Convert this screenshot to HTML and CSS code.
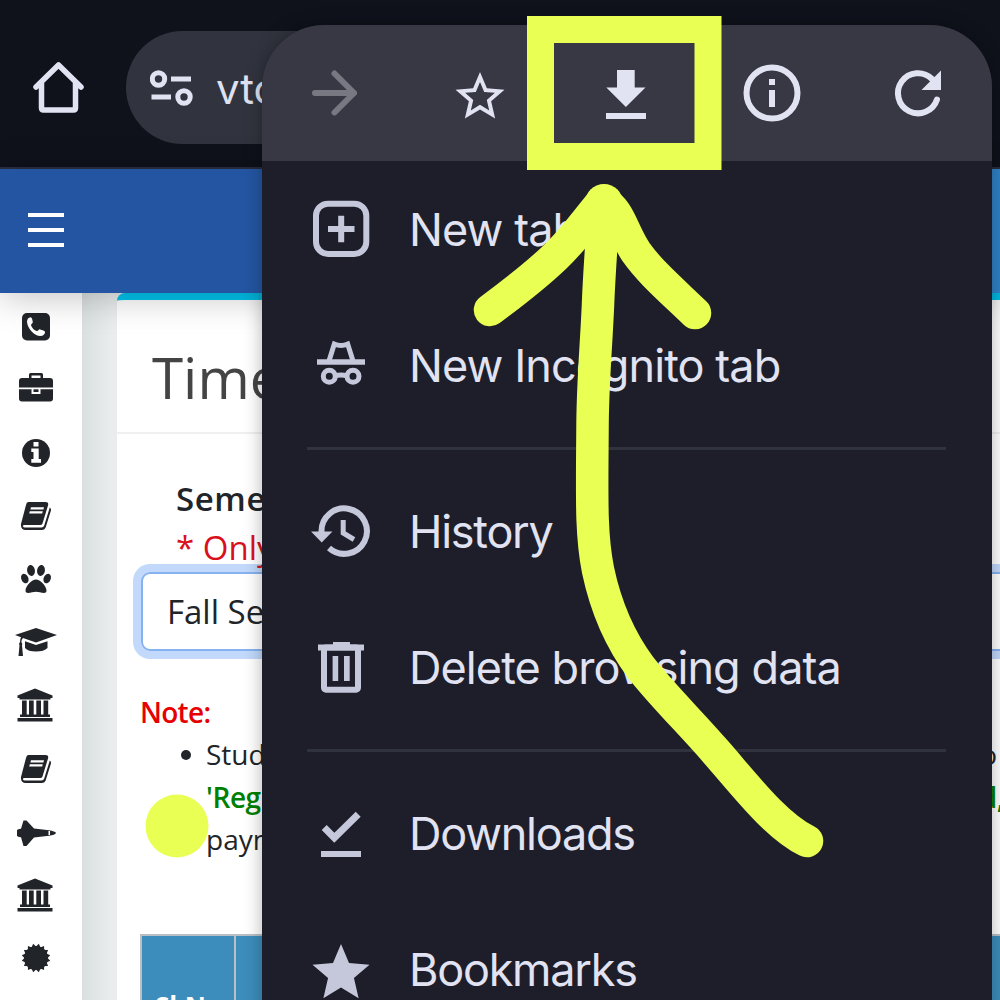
FILE: index.html
```html
<!DOCTYPE html>
<html lang="en">
<head>
<meta charset="utf-8">
<title>Time Table</title>
<link rel="stylesheet" href="styles.css">
</head>
<body>
<svg class="symbols" width="0" height="0">
  <symbol id="bank" viewBox="0 0 44 44">
    <path d="M21 5.500L38.500 12.500V15H36.500V16.500H5.500V15H3.500V12.500Z"/>
    <path d="M8 17.500H12.700V31.500H8ZM15 17.500H19.700V31.500H15ZM22.300 17.500H27V31.500H22.300ZM29.500 17.500H34.200V31.500H29.500ZM6 31.500H36V34H6ZM3.500 35H38.500V38.500H3.500Z"/>
  </symbol>
  <symbol id="book" viewBox="0 0 44 44">
    <path d="M14 8H31.500Q35 8 34 11.500L28.500 29.500Q28 31 26 31H10.500Q8.500 31 9 32.500Q9.300 33.500 11 33.500H27.500Q29.500 33.500 30.200 31.500L35.800 13.500Q37.500 14.500 36.800 17L31.800 33Q30.800 36 27.800 36H11Q6.500 35.500 7 30L12 11Q12.500 8.500 14 8Z"/>
    <path class="cut" d="M17 13.300H30L29.400 15.500H16.400ZM15.800 17.300H28.800L28.200 19.500H15.200Z"/>
  </symbol>
</svg>

<div class="browser">
  <header class="toolbar">
    <svg class="home" viewBox="0 0 60 60"><path d="M8 31L30.500 9L53 31M13.500 27V52Q13.500 54 15.500 54H45.500Q47.500 54 47.500 52V27"/></svg>
    <div class="address">
      <svg class="tune" viewBox="0 0 44 40"><circle cx="8.500" cy="11" r="6.200"/><circle cx="34" cy="29" r="6.200"/><path d="M21 11H41M1.500 29H21"/></svg>
      <span>vtop</span>
    </div>
  </header>

  <nav class="site-bar"><div class="burger"><i></i><i></i><i></i></div></nav>

  <div class="page">
    <aside class="sidebar">
      <svg viewBox="0 0 44 44"><rect x="8" y="8" width="28" height="27.500" rx="5"/><path class="cut" d="M13 16.500c0-2 1.500-4.200 3.500-4.200 1.500 0 2 3 2.300 4.600.2 1.500-2.200 2.200-1.700 3.500 1 2.500 3 4.700 5.600 5.700 1.200.4 2-2 3.400-1.700 2 .4 5 1.300 5 2.500 0 2-2 4.100-4.700 4.100-6 0-13.400-7.800-13.400-14.500z"/></svg>
      <svg viewBox="0 0 44 44"><path d="M15 10V6.500Q15 5 16.500 5H27.500Q29 5 29 6.500V10H36Q39 10 39 13V19.600H5V13Q5 10 8 10ZM17.500 7.500V10H26.500V7.500Z"/><path d="M5 21.300H17.500V26H26.500V21.300H39V30.500Q39 33.500 36 33.500H8Q5 33.500 5 30.500Z"/><path d="M19.500 21.300H24.500V24H19.500Z"/></svg>
      <svg viewBox="0 0 44 44"><circle cx="22" cy="22" r="14"/><path class="cut" d="M19.500 11H24.500V15.500H19.500ZM17.300 17.500H24.700V28H27V31.800H17.300V28H19.500V21H17.300Z"/></svg>
      <svg viewBox="0 0 44 44"><use href="#book"/></svg>
      <svg viewBox="0 0 44 44"><ellipse cx="17" cy="13.500" rx="3.900" ry="5.500" transform="rotate(-10 17 13.500)"/><ellipse cx="27" cy="13.500" rx="3.900" ry="5.500" transform="rotate(10 27 13.500)"/><ellipse cx="10.800" cy="21.500" rx="3.500" ry="5" transform="rotate(-24 10.800 21.500)"/><ellipse cx="33.200" cy="21.500" rx="3.500" ry="5" transform="rotate(24 33.200 21.500)"/><path d="M22 22.500C26 22.500 32.500 29 32.500 33.500C32.500 38 26 34.800 22 34.800S11.500 38 11.500 33.500C11.500 29 18 22.500 22 22.500Z"/></svg>
      <svg viewBox="0 0 44 44"><path d="M22 8L43 15L22 22.500L9 18Q7.500 19.500 7.300 22Q9 23.500 8 25.500L9 36H4.500L5.500 25.500Q4.300 23.500 6 22Q6 19 7 17.200L1 15Z"/><path d="M11 21.300L22 25L33.500 21.300V28Q30 31.500 22 31.500Q14 31.500 11 28Z"/></svg>
      <svg viewBox="0 0 44 44"><use href="#bank"/></svg>
      <svg viewBox="0 0 44 44"><use href="#book"/></svg>
      <svg viewBox="0 0 44 44"><path d="M3 20Q5 18.800 7 18.800L9.500 10.500H12.500L20 18.500L35 20.300Q41 21.200 42 23Q41 25 35 25.700L20 27.500L12.500 36H9.500L7 27.200Q5 27.200 3 26Z"/><path class="cut" d="M34.500 21H36V25H34.500Z"/></svg>
      <svg viewBox="0 0 44 44"><use href="#bank"/></svg>
      <svg viewBox="0 0 44 44"><circle cx="22" cy="22" r="12"/><path d="M22 7.500L28 16L36.500 22L28 28L22 36.500L16 28L7.500 22L16 16Z" transform="rotate(11.250 22 22)"/><path d="M22 7.500L28 16L36.500 22L28 28L22 36.500L16 28L7.500 22L16 16Z" transform="rotate(33.750 22 22)"/><path d="M22 7.500L28 16L36.500 22L28 28L22 36.500L16 28L7.500 22L16 16Z" transform="rotate(56.250 22 22)"/><path d="M22 7.500L28 16L36.500 22L28 28L22 36.500L16 28L7.500 22L16 16Z" transform="rotate(78.750 22 22)"/></svg>
    </aside>
    <main class="panel">
      <h1>Time Table</h1>
      <div class="form">
        <div class="label">Semester</div>
        <div class="hint">* Only</div>
        <div class="select">Fall Semester</div>
      </div>
      <div class="note">Note:</div>
      <div class="notes">
        <div class="row bullet"><span>Stud</span><span class="tail">to</span></div>
        <div class="row green"><span>'Reg</span><span class="tail end">d,</span></div>
        <div class="row"><span>paym</span></div>
      </div>
      <div class="table"><div class="cell first">Sl.No</div><div class="cell"></div></div>
    </main>
  </div>

  <div class="menu">
    <div class="actions">
      <svg class="dim" viewBox="0 0 72 72"><path class="line round" d="M16 36H55M35.500 16.500L55 36L35.500 55.500"/></svg>
      <svg viewBox="0 0 72 72"><path transform="translate(6.600 10.100) scale(2.450)" d="M22 9.240l-7.190-.62L12 2 9.190 8.630 2 9.240l5.460 4.730L5.820 21 12 17.270 18.180 21l-1.630-7.030L22 9.240zM12 15.400l-3.760 2.270 1-4.280-3.320-2.880 4.380-.38L12 6.100l1.710 4.040 4.380.38-3.320 2.880 1 4.280L12 15.400z"/></svg>
      <svg viewBox="0 0 72 72"><path d="M27 13H44.700V30.500H55.500L35.900 50L16.300 30.500H27ZM16 56H56V62H16Z"/></svg>
      <svg viewBox="0 0 72 72"><circle class="line" cx="36" cy="36" r="25.500"/><path d="M33 22H39V28H33ZM33 33H39V50H33Z"/></svg>
      <svg viewBox="0 0 72 72"><path class="line round" d="M51 22A20 20 0 1 0 56 42.500"/><path d="M60 13.500V33H40.500Z"/></svg>
    </div>
    <div class="item"><svg viewBox="0 0 72 72"><rect class="line" x="11" y="10.700" width="50.300" height="50.300" rx="12"/><path class="line" d="M23 36H49.500M36.200 22.700V49.300"/></svg><span>New tab</span></div>
    <div class="item"><svg viewBox="0 0 72 72"><path d="M12 30.200H60V35.800H12Z"/><path class="line thin" d="M24 32L29.300 15Q36 17.800 42.700 15L48 32"/><circle class="line thin" cx="24.300" cy="47.300" r="6"/><circle class="line thin" cx="48" cy="47.300" r="6"/><path class="line thin" d="M30 47Q36 45 42 47"/></svg><span>New Incognito tab</span></div>
    <hr>
    <div class="item"><svg viewBox="0 0 72 72"><path class="line" d="M16.500 37A22.700 22.700 0 1 1 24 53"/><path d="M6 36.500H27.500L16.700 47.500Z"/><path class="line thin" d="M38.200 25V38L49 44.500"/></svg><span class="snug">History</span></div>
    <div class="item"><svg viewBox="0 0 72 72"><path d="M13 13.500H28V11H45V13.500H59V19.500H13ZM27.600 25H33.200V50H27.600ZM39 25H44.700V50H39Z"/><rect class="line" x="19" y="16.500" width="34" height="42.300" rx="2"/></svg><span>Delete browsing data</span></div>
    <hr>
    <div class="item"><svg viewBox="0 0 72 72"><path class="line check" d="M19.200 30.500L29.300 40.700L53.200 17.200"/><path d="M16 54H56V60H16Z"/></svg><span class="snug">Downloads</span></div>
    <div class="item"><svg viewBox="0 0 72 72"><path transform="translate(1.800 5.300) scale(2.850)" d="M12 17.270L18.180 21l-1.640-7.030L22 9.240l-7.190-.61L12 2 9.190 8.630 2 9.240l5.460 4.730L5.820 21z"/></svg><span class="snug">Bookmarks</span></div>
  </div>

  <svg class="markup" viewBox="0 0 1000 1000">
    <circle class="dot" cx="177" cy="826" r="31.500"/>
    <path class="box" d="M540.500 29.500H708V156.500H540.500Z"/>
    <path class="stroke" d="M604 202C602 240 599 275 598 305C596 350 592.500 385 592.500 430C592 500 591 535 598 570C606 608 620 640 641 668C665 698 690 722 716 752C745 785 775 825 807 841"/>
    <path class="stroke" d="M603 201C588 218 575 238 555 257C535 276 513 293 490 310"/>
    <path class="stroke" d="M608 205C620 214 624 234 636 252C650 272 670 289 695 313"/>
    <circle class="dot" cx="604" cy="203" r="19"/>
  </svg>
</div>
</body>
</html>
```
FILE: styles.css
```css
* { box-sizing: border-box; }
body { margin: 0; background: #fff; }
.symbols { position: absolute; }
.browser {
  position: relative;
  width: 1000px;
  height: 1000px;
  overflow: hidden;
  font-family: "Open Sans", sans-serif;
  color: #212529;
}

/* browser toolbar */
.toolbar {
  display: flex;
  height: 169px;
  padding: 31px 20px 0 28px;
  background: #0f121b;
  border-bottom: 2px solid #2a2f3f;
}
.home {
  flex: none;
  width: 60px;
  height: 60px;
  margin-top: 25px;
  fill: none;
  stroke: #e1e3f3;
  stroke-width: 5.5;
  stroke-linecap: round;
  stroke-linejoin: round;
}
.address {
  display: flex;
  flex: 1;
  align-items: center;
  height: 113px;
  margin-left: 38px;
  padding-left: 24px;
  border-radius: 57px;
  background: #31333e;
  color: #dfe1f0;
  font: 42px/113px Inter, sans-serif;
}
.address span { padding-top: 2px; }
.tune {
  width: 44px;
  height: 40px;
  margin-right: 22px;
  fill: none;
  stroke: #e1e3f3;
  stroke-width: 5;
}

/* site header */
.site-bar {
  position: relative;
  z-index: 1;
  height: 124px;
  padding: 43.500px 28px;
  background: linear-gradient(90deg, #2455a2 27%, #2f82c6 100%);
  box-shadow: 0 4px 34px rgba(0, 0, 0, .24);
}
.burger { display: flex; flex-direction: column; gap: 11px; width: 36px; }
.burger i { height: 4px; background: #fff; }

.page {
  display: flex;
  height: 707px;
  background: linear-gradient(90deg, #dadfdf 82px, #e9edee 112px);
}
.sidebar {
  display: flex;
  flex-direction: column;
  flex: none;
  width: 82px;
  margin-right: 35px;
  padding: 2px 0 0 14px;
  background: #fff;
}
.sidebar svg { flex: none; width: 44px; height: 44px; margin: 9.600px 0 9.550px; fill: #212429; fill-rule: evenodd; }
.cut { fill: #fff; }

/* content panel */
.panel {
  flex: 1;
  min-width: 0;
  border-top: 7px solid #00c4ee;
  border-radius: 8px 0 0 0;
  background: #fff;
}
h1 {
  height: 134px;
  margin: 0;
  padding: 23px 0 0 35px;
  border-bottom: 2px solid #f0f0f0;
  color: #444;
  font-size: 56.500px;
  font-weight: 400;
  line-height: 110px;
}
.form { padding: 41px 0 0 24px; font-size: 33px; line-height: 48.500px; }
.label, .hint { padding-left: 35px; }
.label { font-weight: 600; letter-spacing: .6px; }
.hint { color: #d9101c; }
.select {
  height: 79px;
  margin-right: -20px;
  padding-left: 24px;
  border: 2px solid #86b2f1;
  border-radius: 9px;
  box-shadow: 0 0 0 8px #c2d9fb;
  line-height: 76px;
}
.note { margin: 40px 0 0 23px; color: #e60000; font-size: 28px; font-weight: 600; letter-spacing: -.7px; line-height: 42.400px; }
.notes { padding-left: 89px; font-size: 28px; line-height: 42.200px; }
.row { display: flex; justify-content: space-between; height: 42.200px; }
.bullet { align-items: center; margin-left: -25px; }
.bullet::before { content: ""; width: 10px; height: 10px; margin-right: 15px; border-radius: 50%; background: #212529; }
.bullet .tail { margin-left: auto; margin-right: 3px; }
.green { color: #008000; font-weight: 600; letter-spacing: -.4px; }
.end { margin-right: -4px; }
.table {
  display: flex;
  height: 120px;
  margin: 74px 0 0 23px;
  border: 2px solid #b9bfc3;
  border-right: 0;
  background: #3c8dbc;
}
.cell { color: #fff; font-size: 26px; font-weight: 700; line-height: 36px; padding: 52px 0 0 13px; }
.first { width: 94px; border-right: 2px solid #b9bfc3; }

/* overflow menu */
.menu {
  position: absolute;
  z-index: 2;
  top: 25px;
  left: 262px;
  width: 730px;
  height: 1020px;
  overflow: hidden;
  border-radius: 62px 62px 0 0;
  background: #1d1e29;
  box-shadow: 0 0 18px rgba(0, 0, 0, .3);
}
.actions { display: flex; justify-content: space-around; align-items: center; height: 136px; padding-right: 2px; background: #373843; color: #e1e3f3; }
.menu svg { flex: none; width: 72px; height: 72px; fill: currentColor; }
.menu .dim { color: #777882; }
.menu .line { fill: none; stroke: currentColor; stroke-width: 6; }
.menu .thin { stroke-width: 5; }
.menu .check { stroke-width: 7; }
.menu .round { stroke-linecap: round; stroke-linejoin: round; }
.item { display: flex; align-items: center; height: 136px; padding-left: 43px; color: #c5c7da; }
.item span { margin-left: 32px; padding-top: 1px; color: #e1e3f3; font: 45px/60px Inter, sans-serif; letter-spacing: -.92px; white-space: nowrap; }
.item .snug { letter-spacing: -1.250px; }
hr { width: 639px; height: 3px; margin: 14px 0 13px 45px; border: 0; background: #30323d; }

/* freehand annotations */
.markup { position: absolute; z-index: 3; inset: 0; width: 1000px; height: 1000px; }
.dot { fill: #eaff54; }
.box { fill: none; stroke: #eaff54; stroke-width: 27; }
.stroke { fill: none; stroke: #eaff54; stroke-width: 32.500; stroke-linecap: round; stroke-linejoin: round; }
```
